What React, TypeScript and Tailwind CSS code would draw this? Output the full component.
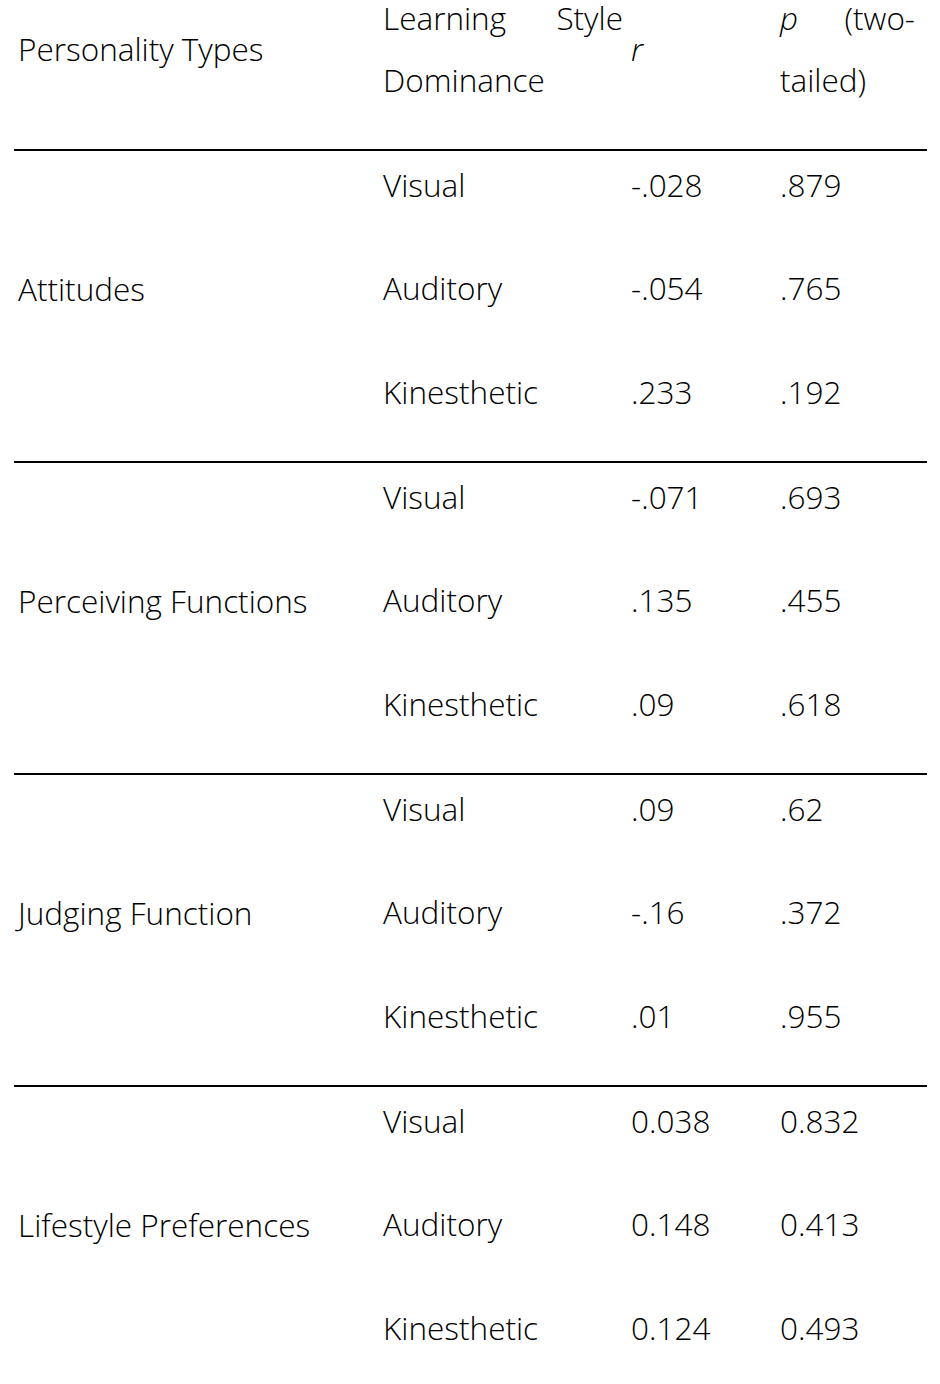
import React from 'react';

type Row = { style: string; r: string; p: string };
type Group = { label: string; rows: Row[] };

const groups: Group[] = [
  {
    label: 'Attitudes',
    rows: [
      { style: 'Visual', r: '-.028', p: '.879' },
      { style: 'Auditory', r: '-.054', p: '.765' },
      { style: 'Kinesthetic', r: '.233', p: '.192' },
    ],
  },
  {
    label: 'Perceiving Functions',
    rows: [
      { style: 'Visual', r: '-.071', p: '.693' },
      { style: 'Auditory', r: '.135', p: '.455' },
      { style: 'Kinesthetic', r: '.09', p: '.618' },
    ],
  },
  {
    label: 'Judging Function',
    rows: [
      { style: 'Visual', r: '.09', p: '.62' },
      { style: 'Auditory', r: '-.16', p: '.372' },
      { style: 'Kinesthetic', r: '.01', p: '.955' },
    ],
  },
  {
    label: 'Lifestyle Preferences',
    rows: [
      { style: 'Visual', r: '0.038', p: '0.832' },
      { style: 'Auditory', r: '0.148', p: '0.413' },
      { style: 'Kinesthetic', r: '0.124', p: '0.493' },
    ],
  },
];

const cols = 'grid grid-cols-[365px_248px_149px_151px]';

const App = () => {
  return (
    <div className="w-[940px] h-[1384px] overflow-hidden bg-white text-black">
      <div className="ml-[14px] w-[913px] font-['Open_Sans','Liberation_Sans',sans-serif] font-light text-[31.5px] leading-[62px]">
        {/* header: first line sits right under the top edge */}
        <div className={`${cols} items-start h-[149px]`}>
          <div className="pl-[4px] pt-[18px]">Personality Types</div>
          <div className="pl-[4px] pr-[4px]">
            <div className="flex justify-between h-[36px] leading-[36px]">
              <span>Learning</span>
              <span>Style</span>
            </div>
            <div className="mt-[13px]">Dominance</div>
          </div>
          <div className="pl-[4px] pt-[18px] italic">r</div>
          <div className="pl-[4px] pr-[12px]">
            <div className="flex justify-between h-[36px] leading-[36px]">
              <span className="italic">p</span>
              <span>(two-</span>
            </div>
            <div className="mt-[13px]">tailed)</div>
          </div>
        </div>

        {groups.map((g) => (
          <div
            key={g.label}
            className={`${cols} grid-rows-[repeat(3,103.33px)] border-t-2 border-black`}
          >
            <div className="row-span-3 flex items-center pl-[4px] pb-[34px]">{g.label}</div>
            {g.rows.map((row, i) => (
              <React.Fragment key={i}>
                <div className="col-start-2 pl-[4px] pt-[3px]">{row.style}</div>
                <div className="col-start-3 pl-[4px] pt-[3px]">{row.r}</div>
                <div className="col-start-4 pl-[4px] pt-[3px]">{row.p}</div>
              </React.Fragment>
            ))}
          </div>
        ))}
      </div>
    </div>
  );
};

export default App;
